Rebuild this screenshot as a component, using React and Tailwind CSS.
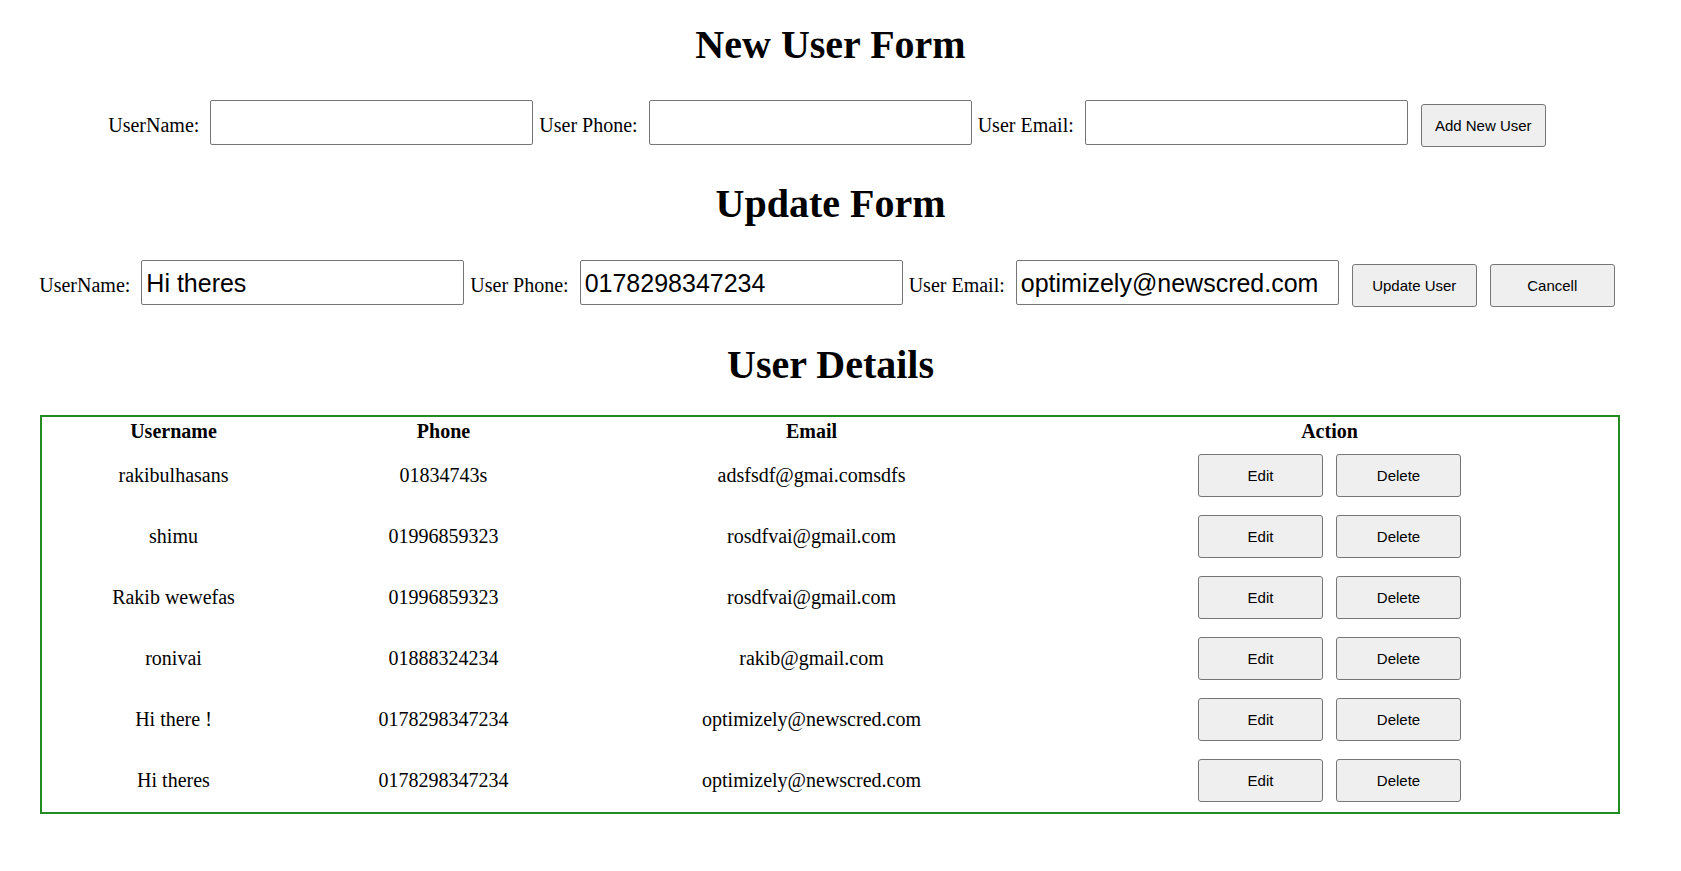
import React from "react";

const users = [
  { name: "rakibulhasans", phone: "01834743s", email: "adsfsdf@gmai.comsdfs" },
  { name: "shimu", phone: "01996859323", email: "rosdfvai@gmail.com" },
  { name: "Rakib wewefas", phone: "01996859323", email: "rosdfvai@gmail.com" },
  { name: "ronivai", phone: "01888324234", email: "rakib@gmail.com" },
  { name: "Hi there !", phone: "0178298347234", email: "optimizely@newscred.com" },
  { name: "Hi theres", phone: "0178298347234", email: "optimizely@newscred.com" },
];

function Btn({ children, className = "" }) {
  return (
    <button
      className={
        "w-[125px] h-[43px] bg-[#efefef] border border-[#767676] rounded-[3px] text-[15px] text-black font-['Liberation_Sans',Arial,sans-serif] leading-none " +
        className
      }
    >
      {children}
    </button>
  );
}

function Field({ label, value, first }) {
  return (
    <>
      <span className={"mt-[14px] text-[20px] leading-[23px] whitespace-nowrap " + (first ? "" : "ml-[6px]")}>
        {label}
      </span>
      <input
        defaultValue={value}
        className="ml-[11px] w-[323px] h-[45px] border border-[#767676] rounded-[2px] px-[4px] pt-[1px] text-[25px] text-black font-['Liberation_Sans',Arial,sans-serif] outline-none bg-white"
      />
    </>
  );
}

export default function App() {
  return (
    <div className="min-h-screen bg-white text-black font-['Liberation_Serif','Times_New_Roman',serif] pr-[20px]">
      <h1 className="pt-[22px] text-[40px] font-bold leading-[46px] text-center">New User Form</h1>
      <div className="mt-[32px] flex justify-center items-start pr-[7px]">
        <Field label="UserName:" first />
        <Field label="User Phone:" />
        <Field label="User Email:" />
        <Btn className="ml-[13px] mt-[4px]">Add New User</Btn>
      </div>

      <h1 className="mt-[34px] text-[40px] font-bold leading-[46px] text-center">Update Form</h1>
      <div className="mt-[33px] flex justify-center items-start pr-[7px]">
        <Field label="UserName:" value="Hi theres" first />
        <Field label="User Phone:" value="0178298347234" />
        <Field label="User Email:" value="optimizely@newscred.com" />
        <Btn className="ml-[13px] mt-[4px]">Update User</Btn>
        <Btn className="ml-[13px] mt-[4px]">Cancell</Btn>
      </div>

      <h1 className="mt-[35px] text-[40px] font-bold leading-[46px] text-center">User Details</h1>

      <div className="mt-[27px] ml-[40px] w-[1580px] border-2 border-[#228b22] pb-[1px]">
        <div className="grid grid-cols-[263px_277px_459px_577px] pt-[3px] h-[28px] text-[20px] leading-[23px] font-bold text-center">
          <div>Username</div>
          <div>Phone</div>
          <div>Email</div>
          <div>Action</div>
        </div>
        {users.map((u, i) => (
          <div
            key={i}
            className="grid grid-cols-[263px_277px_459px_577px] h-[61px] items-center text-[20px] leading-[23px] text-center"
          >
            <div>{u.name}</div>
            <div>{u.phone}</div>
            <div>{u.email}</div>
            <div className="flex justify-center gap-[13px]">
              <Btn>Edit</Btn>
              <Btn>Delete</Btn>
            </div>
          </div>
        ))}
      </div>
    </div>
  );
}
